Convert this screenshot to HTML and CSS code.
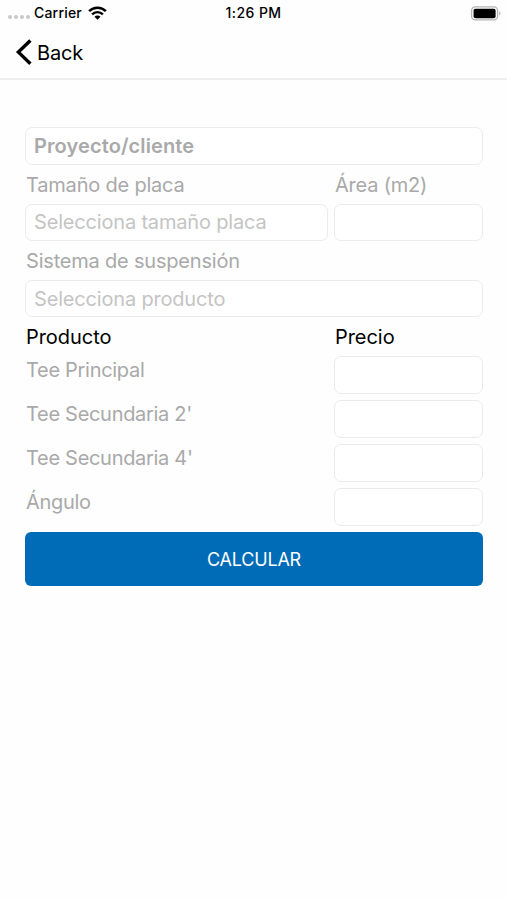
FILE: index.html
```html
<!DOCTYPE html>
<html lang="es">
<head>
    <meta charset="UTF-8">
    <meta name="viewport" content="width=device-width, initial-scale=1.0">
    <title>Calcular</title>
    <link rel="stylesheet" href="styles.css">
</head>
<body>
    <div class="status">
        <div class="carrier">
            <span class="dots"><i></i><i></i><i></i><i></i></span>
            <span class="carrier-name">Carrier</span>
            <svg class="wifi" width="19" height="14" viewBox="0 0 19 14">
                <path d="M1.1 5.1a12 12 0 0 1 16.8 0" fill="none" stroke="#000" stroke-width="2.5"/>
                <path d="M4.1 8.4a7.7 7.7 0 0 1 10.8 0" fill="none" stroke="#000" stroke-width="2.3"/>
                <path d="M6.5 10.8a4.2 4.2 0 0 1 6 0L9.5 13.8z"/>
            </svg>
        </div>
        <span class="time">1:26 PM</span>
        <svg class="battery" width="31" height="15" viewBox="0 0 31 15">
            <rect x="1.6" y="0.9" width="26" height="13" rx="3.6" fill="none" stroke="#b4b4b4" stroke-width="1.3"/>
            <rect x="3.6" y="2.8" width="22" height="9.4" rx="1.8"/>
            <path d="M29.2 5.4a2.2 2.2 0 0 1 0 4z" fill="#b4b4b4"/>
        </svg>
    </div>

    <div class="navbar">
        <svg class="chevron" width="17" height="27" viewBox="0 0 17 27">
            <path d="M15.4 1.5L3.4 13.1l12 11.6" fill="none" stroke="#000" stroke-width="3.4"/>
        </svg>
        <span class="back">Back</span>
    </div>

    <form class="form">
        <input class="field project" type="text" placeholder="Proyecto/cliente">

        <div class="row">
            <label class="label">Tamaño de placa</label>
            <label class="label">Área (m2)</label>
        </div>
        <div class="row">
            <input class="field" type="text" placeholder="Selecciona tamaño placa">
            <input class="field" type="text">
        </div>

        <div class="row">
            <label class="label">Sistema de suspensión</label>
        </div>
        <input class="field" type="text" placeholder="Selecciona producto">

        <div class="row">
            <span class="label dark">Producto</span>
            <span class="label dark">Precio</span>
        </div>
        <div class="row item">
            <label class="name">Tee Principal</label>
            <input class="field" type="text">
        </div>
        <div class="row item">
            <label class="name">Tee Secundaria 2'</label>
            <input class="field" type="text">
        </div>
        <div class="row item">
            <label class="name">Tee Secundaria 4'</label>
            <input class="field" type="text">
        </div>
        <div class="row item">
            <label class="name">Ángulo</label>
            <input class="field" type="text">
        </div>

        <button class="calculate" type="button">CALCULAR</button>
    </form>
</body>
</html>
```

FILE: styles.css
```css
* {
    box-sizing: border-box;
    margin: 0;
    padding: 0;
}

body {
    min-height: 900px;
    background-color: #fefefe;
    font-family: Inter, "Liberation Sans", sans-serif;
    color: #000;
}

.status {
    display: grid;
    grid-template-columns: 1fr auto 1fr;
    align-items: center;
    height: 26px;
    padding: 0 6px 0 8px;
    font-size: 14px;
    font-weight: 500;
}

.carrier {
    display: flex;
    align-items: center;
}

.carrier-name {
    padding-bottom: 2px;
    letter-spacing: 0.2px;
}

.time {
    margin-right: 2px;
    padding-bottom: 2px;
    letter-spacing: 0.45px;
}

.dots {
    display: flex;
    gap: 2px;
    margin: 8px 4px 0 0;
}

.dots i {
    width: 4px;
    height: 4px;
    border-radius: 50%;
    background-color: #c8c8c8;
}

.wifi {
    margin-left: 6px;
}

.battery {
    justify-self: end;
}

.navbar {
    display: flex;
    align-items: center;
    height: 54px;
    padding-left: 15px;
    border-bottom: 2px solid #efefef;
}

.back {
    margin-left: 5px;
    padding-top: 1px;
    font-size: 20px;
    letter-spacing: -0.2px;
}

.form {
    display: flex;
    flex-direction: column;
    padding: 47.3px 24px 0 25px;
}

.row {
    display: grid;
    grid-template-columns: 303px 149px;
    column-gap: 6px;
}

.label {
    height: 38.8px;
    padding-left: 1px;
    font-size: 20px;
    line-height: 40px;
    letter-spacing: -0.2px;
    color: #a9a9a9;
}

.dark {
    color: #000;
    letter-spacing: -0.05px;
}

.field {
    width: 100%;
    height: 37.5px;
    padding: 0 8px;
    border: 1px solid #ebebeb;
    border-radius: 7px;
    background-color: #fff;
    font-family: inherit;
    font-size: 20px;
    letter-spacing: -0.18px;
    outline: none;
}

.field::placeholder {
    color: #c4c4c4;
    opacity: 1;
}

.project {
    font-weight: 600;
    letter-spacing: 0.1px;
}

.project::placeholder {
    color: #a9a9a9;
}

.item {
    height: 44px;
}

.name {
    padding-left: 1px;
    font-size: 20px;
    line-height: 28px;
    letter-spacing: -0.3px;
    color: #a9a9a9;
}

.calculate {
    height: 54px;
    border: none;
    border-radius: 6px;
    background-color: #006cb7;
    color: #fff;
    font-family: inherit;
    font-size: 18px;
    letter-spacing: -0.2px;
}
```
